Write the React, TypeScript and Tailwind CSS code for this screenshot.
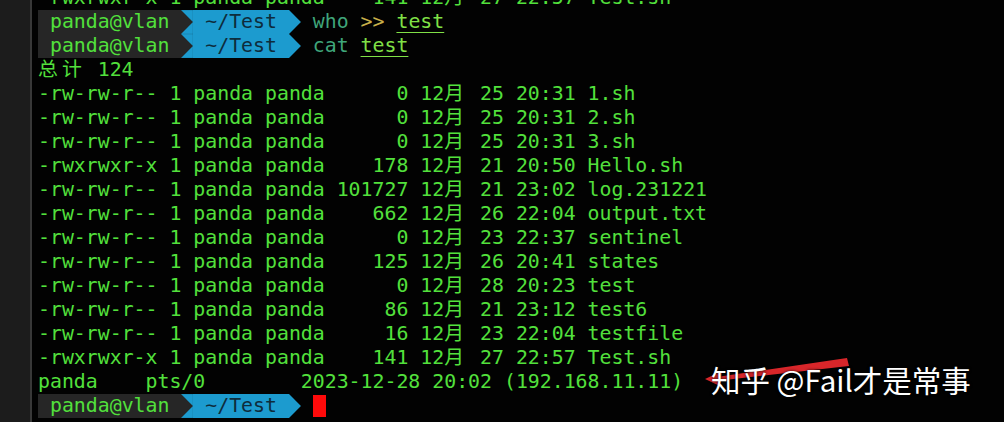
import React from "react";

const CELL = 11.95;

const files = [
  "-rw-rw-r-- 1 panda panda      0 12月 25 20:31 1.sh",
  "-rw-rw-r-- 1 panda panda      0 12月 25 20:31 2.sh",
  "-rw-rw-r-- 1 panda panda      0 12月 25 20:31 3.sh",
  "-rwxrwxr-x 1 panda panda    178 12月 21 20:50 Hello.sh",
  "-rw-rw-r-- 1 panda panda 101727 12月 21 23:02 log.231221",
  "-rw-rw-r-- 1 panda panda    662 12月 26 22:04 output.txt",
  "-rw-rw-r-- 1 panda panda      0 12月 23 22:37 sentinel",
  "-rw-rw-r-- 1 panda panda    125 12月 26 20:41 states",
  "-rw-rw-r-- 1 panda panda      0 12月 28 20:23 test",
  "-rw-rw-r-- 1 panda panda     86 12月 21 23:12 test6",
  "-rw-rw-r-- 1 panda panda     16 12月 23 22:04 testfile",
  "-rwxrwxr-x 1 panda panda    141 12月 27 22:57 Test.sh",
];

// wide chars take two terminal cells
const TermText = ({ text }: { text: string }) => {
  const parts = text.split(/([\u4e00-\u9fff])/);
  return (
    <>
      {parts.map((p, i) =>
        /[\u4e00-\u9fff]/.test(p) ? (
          <span key={i} className="inline-block w-[23.9px]">
            {p}
          </span>
        ) : (
          <span key={i}>{p}</span>
        )
      )}
    </>
  );
};

const Row = ({ children }: { children: React.ReactNode }) => (
  <div className="flex h-[24px] items-center whitespace-pre leading-[24px]">
    {children}
  </div>
);

const Prompt = ({ children }: { children?: React.ReactNode }) => (
  <Row>
    <span className="bg-[#262626] text-[#52e03c]">{" panda@vlan "}</span>
    <svg width={CELL} height={24} viewBox="0 0 12 24" className="block">
      <rect width="12" height="24" fill="#1c9bcf" />
      <polygon points="0,0 12,12 0,24" fill="#262626" />
    </svg>
    <span className="bg-[#1c9bcf] text-[#0e2c3c]">{" ~/Test "}</span>
    <svg width={CELL} height={24} viewBox="0 0 12 24" className="block">
      <polygon points="0,0 12,12 0,24" fill="#1c9bcf" />
    </svg>
    <span> </span>
    {children}
  </Row>
);

export default function App() {
  return (
    <div className="relative flex h-[422px] w-[1004px] overflow-hidden bg-[#020202]">
      <div className="w-[32px] shrink-0 border-r-2 border-[#383838] bg-[#1c1c1c]" />
      <div
        className="mt-[-14px] flex flex-col pl-[6px] text-[19.85px] text-[#52e03c]"
        style={{ fontFamily: '"DejaVu Sans Mono", "Noto Sans CJK SC", monospace' }}
      >
        <Row>
          <TermText text="-rwxrwxr-x 1 panda panda    141 12月 27 22:57 Test.sh" />
        </Row>
        <Prompt>
          <span className="text-[#3fa67b]">who</span>
          <span> </span>
          <span className="text-[#c8b04a]">{">>"}</span>
          <span> </span>
          <span className="text-[#80e046] underline underline-offset-[4px]">test</span>
        </Prompt>
        <Prompt>
          <span className="text-[#3fa67b]">cat</span>
          <span> </span>
          <span className="text-[#80e046] underline underline-offset-[4px]">test</span>
        </Prompt>
        <Row>
          <TermText text="总计 124" />
        </Row>
        {files.map((f) => (
          <Row key={f}>
            <TermText text={f} />
          </Row>
        ))}
        <Row>
          <span>{"panda    pts/0        2023-12-28 20:02 (192.168.11.11)"}</span>
        </Row>
        <Prompt>
          <span className="inline-block h-[22px] w-[13px] bg-[#ff0a0a]" />
        </Prompt>
      </div>

      {/* watermark */}
      <svg
        className="absolute left-[700px] top-[352px]"
        width="160"
        height="40"
        viewBox="0 0 160 40"
      >
        <polygon points="10,26 147,6 149,14 16,29" fill="#d8262a" />
        <polygon points="5,27 22,19 20,34" fill="#d8262a" />
      </svg>
      <div
        className="absolute left-[711px] top-[361px] text-[29.5px] leading-[36px] text-white [text-shadow:0_0_3px_rgba(0,0,0,0.9)]"
        style={{ fontFamily: '"Noto Sans CJK SC", "Noto Sans", sans-serif' }}
      >
        知乎 @Fail才是常事
      </div>
    </div>
  );
}
